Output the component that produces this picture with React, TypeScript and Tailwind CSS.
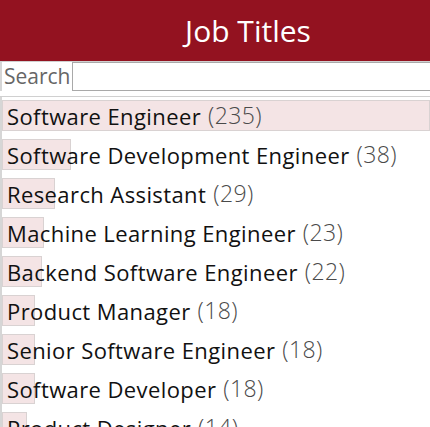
import React from 'react'

const jobs = [
  { title: 'Software Engineer', count: 235 },
  { title: 'Software Development Engineer', count: 38 },
  { title: 'Research Assistant', count: 29 },
  { title: 'Machine Learning Engineer', count: 23 },
  { title: 'Backend Software Engineer', count: 22 },
  { title: 'Product Manager', count: 18 },
  { title: 'Senior Software Engineer', count: 18 },
  { title: 'Software Developer', count: 18 },
  { title: 'Product Designer', count: 14 },
]

const font = { fontFamily: '"Open Sans", "Noto Sans", sans-serif' }

function JobRow({ title, count, max }: { title: string; count: number; max: number }) {
  // bar width is taken from the count
  const width = Math.round((count / max) * 428)
  return (
    <div className="relative h-[31px] shrink-0">
      <div
        className="absolute left-0 top-0 h-full bg-[#f4e4e5] border border-[#d9d2d2]"
        style={{ width }}
      />
      <div className="relative flex h-full items-center pl-[5px] text-[22px] tracking-[0.4px] leading-none whitespace-nowrap">
        <span className="font-medium text-[#111]">{title}</span>
        <span className="ml-[7px] font-light text-[23px] text-[#4a4a4a]">({count})</span>
      </div>
    </div>
  )
}

export default function App() {
  const max = jobs[0].count
  return (
    <div className="w-[430px] h-[427px] overflow-hidden bg-white" style={font}>
      {/* 标题 */}
      <div className="h-[61px] bg-[#931220] flex items-center justify-center pl-[66px]">
        <h1 className="text-white text-[30px] font-medium leading-none">Job Titles</h1>
      </div>

      {/* 搜索 */}
      <div className="flex h-[36px] items-start border-t border-[#c8c8c8] border-b border-[#d0d0d0]">
        <label className="w-[72px] h-[29px] flex items-center pl-[2px] text-[21px] text-[#666] border-l-2 border-[#d6d6d6]">
          Search
        </label>
        <input className="flex-1 h-[29px] border border-[#a9a9a9] border-r-0 outline-none" />
      </div>

      {/* 列表 */}
      <div className="flex flex-col gap-[8px] pt-[3px] border-l-2 border-[#d6d6d6] h-full">
        {jobs.map((j) => (
          <JobRow key={j.title} title={j.title} count={j.count} max={max} />
        ))}
      </div>
    </div>
  )
}
